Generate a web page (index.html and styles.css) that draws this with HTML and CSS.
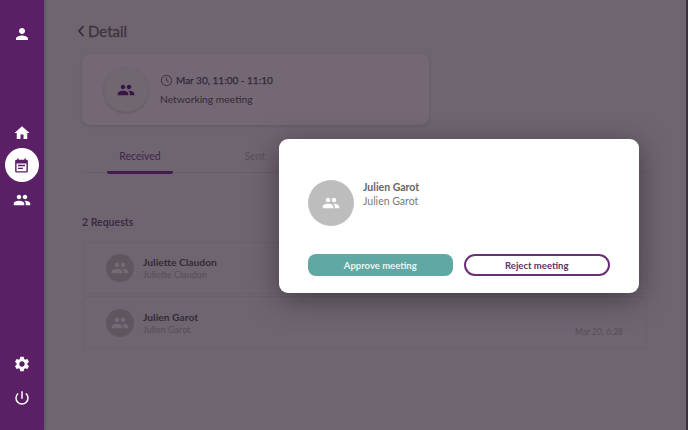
FILE: index.html
```html
<!DOCTYPE html>
<html lang="en">
<head>
<meta charset="utf-8">
<title>Detail</title>
<link rel="stylesheet" href="styles.css">
</head>
<body>
<svg class="defs" width="0" height="0" aria-hidden="true">
  <symbol id="people" viewBox="0 0 24 24"><path d="M16 11c1.66 0 2.99-1.34 2.99-3S17.66 5 16 5s-3 1.34-3 3 1.34 3 3 3zm-8 0c1.66 0 2.99-1.34 2.99-3S9.66 5 8 5 5 6.34 5 8s1.34 3 3 3zm0 2c-2.33 0-7 1.17-7 3.5V19h14v-2.500C15 14.170 10.330 13 8 13zm8 0c-.29 0-.62.02-.97.05 1.160.84 1.970 1.970 1.970 3.450V19h6v-2.500c0-2.330-4.670-3.500-7-3.500z"/></symbol>
</svg>
<div class="app">
  <nav class="rail">
    <svg class="ico first" viewBox="0 0 24 24"><path d="M12 12c2.210 0 4-1.790 4-4s-1.790-4-4-4-4 1.790-4 4 1.790 4 4 4zm0 2c-2.670 0-8 1.340-8 4v2h16v-2c0-2.660-5.330-4-8-4z"/></svg>
    <div class="rail-mid">
      <svg class="ico" viewBox="0 0 24 24"><path d="M10 20v-6h4v6h5v-8h3L12 3 2 12h3v8z"/></svg>
      <div class="active">
        <svg class="ico-active" viewBox="0 0 24 24"><path d="M19 4h-1V2h-2v2H8V2H6v2H5a2 2 0 0 0-2 2v14a2 2 0 0 0 2 2h14a2 2 0 0 0 2-2V6a2 2 0 0 0-2-2zm0 16H5V9h14v11zM7 11h10v2H7zm0 4h7v2H7z"/></svg>
      </div>
      <svg class="ico"><use href="#people"/></svg>
    </div>
    <div class="rail-bottom">
      <svg class="ico" viewBox="0 0 24 24"><path d="M19.140 12.940c.04-.3.060-.61.060-.94s-.02-.64-.07-.94l2.030-1.580a.49.49 0 0 0 .12-.61l-1.920-3.320a.488.488 0 0 0-.59-.22l-2.390.96c-.5-.38-1.030-.7-1.620-.94l-.36-2.540a.484.484 0 0 0-.48-.41h-3.840c-.24 0-.43.17-.47.41l-.36 2.540c-.59.24-1.130.57-1.620.94l-2.390-.96c-.22-.08-.47 0-.59.22L2.740 8.870c-.12.21-.08.47.12.61l2.030 1.580c-.05.3-.09.63-.09.94s.02.640.07.94l-2.030 1.580a.49.49 0 0 0-.12.61l1.920 3.320c.12.22.37.29.59.22l2.390-.96c.5.38 1.030.7 1.620.94l.36 2.540c.05.24.24.41.48.41h3.840c.24 0 .44-.17.47-.41l.36-2.540c.59-.24 1.130-.56 1.620-.94l2.390.96c.22.08.47 0 .59-.22l1.920-3.320c.12-.22.07-.47-.12-.61l-2.010-1.580zM12 15.600A3.610 3.610 0 0 1 8.400 12c0-1.980 1.620-3.600 3.600-3.600s3.600 1.620 3.600 3.600-1.620 3.600-3.600 3.600z"/></svg>
      <svg class="ico" viewBox="0 0 24 24"><path d="M13 3h-2v10h2V3zm4.830 2.170-1.420 1.420A6.920 6.920 0 0 1 19 12a7 7 0 0 1-14 0c0-2.170.99-4.100 2.580-5.420L6.170 5.170A8.932 8.932 0 0 0 3 12a9 9 0 0 0 18 0c0-2.740-1.220-5.190-3.170-6.830z"/></svg>
    </div>
  </nav>
  <main class="main">
    <h1 class="title">
      <svg class="back" viewBox="0 0 10 14"><path d="M7.500 2 3 7l4.500 5"/></svg>
      <span>Detail</span>
    </h1>
    <section class="card">
      <div class="big-avatar"><svg class="ico-dark"><use href="#people"/></svg></div>
      <div>
        <p class="when">
          <svg class="clock" viewBox="0 0 24 24"><circle cx="12" cy="12" r="9.500"/><path d="M12 6.500V12l4 2.500"/></svg>
          <span>Mar 30, 11:00 - 11:10</span>
        </p>
        <p class="what">Networking meeting</p>
      </div>
    </section>
    <div class="tabs">
      <div class="tab tab-on">Received</div>
      <div class="tab tab-off">Sent</div>
    </div>
    <h2 class="count">2 Requests</h2>
    <div class="row row-a">
      <div class="row-avatar"><svg class="ico-soft"><use href="#people"/></svg></div>
      <div><p class="row-name">Juliette Claudon</p><p class="row-sub">Juliette Claudon</p></div>
    </div>
    <div class="row row-b">
      <div class="row-avatar"><svg class="ico-soft"><use href="#people"/></svg></div>
      <div class="row-b-text"><p class="row-name">Julien Garot</p><p class="row-sub">Julien Garot</p></div>
      <span class="row-date">Mar 20, 6:28</span>
    </div>
  </main>
</div>
<div class="modal">
  <div class="person">
    <div class="modal-avatar"><svg class="ico-white"><use href="#people"/></svg></div>
    <div class="person-text">
      <p class="modal-name">Julien Garot</p>
      <p class="modal-sub">Julien Garot</p>
    </div>
  </div>
  <div class="actions">
    <button class="btn approve">Approve meeting</button>
    <button class="btn reject">Reject meeting</button>
  </div>
</div>
</body>
</html>
```
FILE: styles.css
```css
* { box-sizing: border-box; }
html, body { margin: 0; height: 100%; overflow: hidden; }
body { font-family: Lato, "Open Sans", sans-serif; background: #6f6570; }
p, h1, h2 { margin: 0; font-weight: inherit; }
.defs { position: absolute; }
svg { display: block; }

.app { display: flex; height: 430px; width: 688px; border-right: 2px solid #3b3040; }

.rail { width: 44px; flex: none; background: #5b1f66; display: flex; flex-direction: column; align-items: center; padding: 25px 1px 0 0; box-shadow: 1px 0 2px rgba(60,40,70,.3); }
.ico { width: 18px; height: 18px; fill: #fff; }
.rail-mid { display: flex; flex-direction: column; align-items: center; margin-top: 81px; }
.active { width: 34px; height: 34px; margin: 6px 0 9px; border-radius: 50%; background: #fff; display: flex; align-items: center; justify-content: center; }
.ico-active { width: 17px; height: 17px; fill: #5b1f66; }
.rail-bottom { margin-top: auto; padding-bottom: 23px; display: flex; flex-direction: column; gap: 16px; }

.main { flex: 1; padding: 22px 40px 0 38px; min-width: 0; }
.title { display: flex; align-items: center; gap: 2px; height: 19px; font-size: 15px; line-height: 19px; font-weight: 400; -webkit-text-stroke: .3px #3c3440; color: #3c3440; margin-left: -6px; }
.back { width: 10px; height: 14px; fill: none; stroke: #3a2a40; stroke-width: 1.800; margin-top: -2px; }

.card { width: 347px; height: 71px; margin-top: 13px; display: flex; align-items: center; gap: 12px; padding-left: 22px; border-radius: 8px; background: #736873; box-shadow: 0 1px 3px rgba(50,35,55,.22); }
.big-avatar { width: 44px; height: 44px; border-radius: 50%; background: #716771; box-shadow: 0 1px 3px rgba(50,35,55,.25); display: flex; align-items: center; justify-content: center; }
.ico-dark { width: 18px; height: 18px; fill: #3a1543; }
.when { display: flex; align-items: center; gap: 3px; font-size: 10px; line-height: 14px; -webkit-text-stroke: .25px #33283a; color: #33283a; }
.clock { width: 13px; height: 13px; fill: none; stroke: #3b2c42; stroke-width: 1.800; }
.what { margin-top: 5px; font-size: 10.300px; line-height: 14px; color: #332a36; }

.tabs { display: flex; height: 48px; margin-top: 0; border-bottom: 1px solid #685e69; position: relative; }
.tab { font-size: 10.500px; line-height: 12px; padding-top: 25px; text-align: center; }
.tab-on { width: 66px; margin-left: 25px; height: 49px; color: #42254b; border-bottom: 3px solid #431b4d; border-radius: 0 0 2px 2px; }
.tab-off { width: 50px; margin-left: 57px; color: #5a505b; }

.count { margin-top: 43px; font-size: 10.500px; line-height: 13px; font-weight: 700; color: #3c2a44; }

.row { position: relative; margin-left: 1px; width: 564px; display: flex; align-items: center; gap: 9px; padding-left: 22px; border: 1px solid #6a606b; border-radius: 3px; }
.row-a { height: 52px; margin-top: 13px; }
.row-b { height: 53px; margin-top: 2px; }
.row-b-text { margin-top: 2px; }
.row-avatar { width: 28px; height: 28px; border-radius: 50%; background: #5f565f; display: flex; align-items: center; justify-content: center; }
.ico-soft { width: 18px; height: 18px; fill: #756b76; }
.row-name { font-size: 10.300px; line-height: 13px; font-weight: 700; color: #322c36; }
.row-sub { font-size: 9px; line-height: 12px; color: #564d58; margin-top: 0; }
.row-date { margin-left: auto; margin-right: 23px; align-self: flex-end; margin-bottom: 10px; font-size: 8.500px; line-height: 11px; color: #564d58; }

.modal { position: absolute; left: 279px; top: 139px; width: 360px; height: 154px; padding: 41px 29px 0; background: #fff; border-radius: 9px; box-shadow: 0 6px 28px rgba(30,20,35,.5); }
.person { display: flex; gap: 9px; }
.modal-avatar { width: 46px; height: 46px; border-radius: 50%; background: #bdbdbd; display: flex; align-items: center; justify-content: center; }
.ico-white { width: 18px; height: 18px; fill: #fff; }
.modal-name { font-size: 10.500px; line-height: 14px; font-weight: 700; color: #666; }
.modal-sub { font-size: 10.500px; line-height: 14px; color: #7a7a7a; }
.actions { display: flex; gap: 11px; margin-top: 28px; }
.btn { height: 22px; padding: 0; border-radius: 11px; font-family: inherit; font-size: 9.500px; font-weight: 700; }
.approve { width: 145px; background: #5fa8a3; border: 0; color: #e8f4f3; border-radius: 8px; }
.reject { width: 147px; background: #fff; border: 2px solid #6b2f75; color: #62306d; }
```
